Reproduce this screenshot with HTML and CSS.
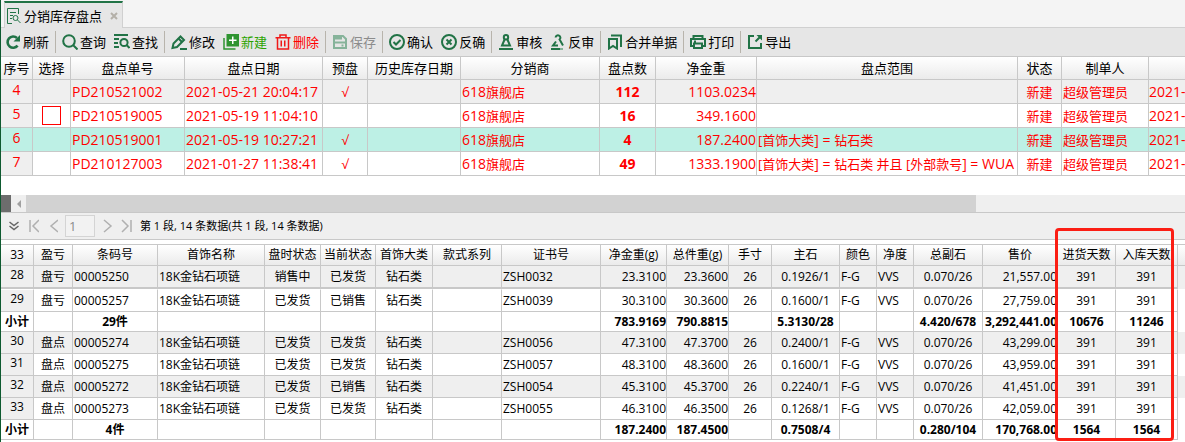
FILE: index.html
```html
<!DOCTYPE html>
<html lang="zh-CN">
<head>
    <meta charset="UTF-8">
    <title>分销库存盘点</title>
    <link rel="stylesheet" href="styles.css">
</head>
<body>
    <div class="tabs">
        <div class="tab">
            <svg class="tab-icon" width="16" height="18" viewBox="0 0 16 18" fill="none" stroke="#217346">
                <path d="M6 16.5H1.5V1.5H12.5V7M4 5.5h6M4 8.5h3M4 11.5h2"/>
                <circle cx="9.5" cy="11" r="2.5"/>
                <path d="M11.5 13l3 3"/>
            </svg>
            <span>分销库存盘点</span>
            <button class="tab-close" aria-label="关闭">
                <svg width="8" height="8" viewBox="0 0 8 8" stroke="#b4b0a8" stroke-width="2"><path d="M1 1l6 6M7 1L1 7"/></svg>
            </button>
        </div>
    </div>

    <div class="toolbar">
        <button class="tool">
            <svg width="16" height="16" viewBox="0 0 16 16" fill="none" stroke="#217346" stroke-width="2.6"><path d="M12.6 11.6A5.6 5.6 0 1 1 12 4"/><path d="M15 1v6.500H8.500z" fill="#217346" stroke="none"/></svg>
            刷新
        </button>
        <span class="sep"></span>
        <button class="tool">
            <svg width="16" height="16" viewBox="0 0 16 16" fill="none" stroke="#217346" stroke-width="2"><circle cx="7" cy="7" r="5.8"/><path d="M11 11l4.500 4.500"/></svg>
            查询
        </button>
        <button class="tool">
            <svg width="16" height="16" viewBox="0 0 16 16" fill="none" stroke="#217346" stroke-width="2"><path d="M0 1h14M0 5h5M0 9h4M0 13h5"/><circle cx="10" cy="8.500" r="3.6"/><path d="M12.500 11l3 3"/></svg>
            查找
        </button>
        <span class="sep"></span>
        <button class="tool">
            <svg width="16" height="16" viewBox="0 0 16 16" fill="none" stroke="#217346" stroke-width="2"><path d="M1.500 14l1-4.500L9.500 2.500l3.500 3.500L6 13z"/><path d="M7.500 4.500L11 8M9 15h7"/></svg>
            修改
        </button>
        <button class="tool tool-new">
            <svg width="16" height="16" viewBox="0 0 16 16"><path d="M1 4v11h11.500" fill="none" stroke="#2e9430" stroke-width="1.500"/><path d="M3.500 0H16v12.500H3.500z" fill="#2e9430"/><path d="M9.750 2.500v7.500M6 6.250h7.500" stroke="#fff" stroke-width="1.500"/></svg>
            新建
        </button>
        <button class="tool tool-delete">
            <svg width="16" height="16" viewBox="0 0 16 16" fill="none" stroke="#f01818" stroke-width="1.500"><path d="M0.500 3.750h15M5 3V1h6v2M2.500 4v11h11V4M6.250 6.500v6M9.750 6.500v6"/></svg>
            删除
        </button>
        <span class="sep"></span>
        <button class="tool" disabled>
            <svg width="16" height="16" viewBox="0 0 16 16" fill="none" stroke="#86b39a" stroke-width="2"><path d="M2 2h9l3 3v9H2z"/><path d="M3 4h7" stroke-width="3"/><path d="M2 8.500h12M9.500 11.500h2"/></svg>
            保存
        </button>
        <span class="sep"></span>
        <button class="tool">
            <svg width="16" height="16" viewBox="0 0 16 16" fill="none" stroke="#217346" stroke-width="2"><circle cx="8" cy="8" r="7"/><path d="M4.500 8l2.500 2.500 4.500-4.500"/></svg>
            确认
        </button>
        <button class="tool">
            <svg width="16" height="16" viewBox="0 0 16 16" fill="none" stroke="#217346" stroke-width="2"><circle cx="8" cy="8" r="7"/><path d="M5.500 5.500l5 5M10.500 5.500l-5 5"/></svg>
            反确
        </button>
        <span class="sep"></span>
        <button class="tool">
            <svg width="16" height="16" viewBox="0 0 16 16" fill="none" stroke="#217346" stroke-width="2"><circle cx="8" cy="3.200" r="2.200"/><path d="M6.800 5L4 11.500h8L9.200 5M1 15h14"/></svg>
            审核
        </button>
        <button class="tool">
            <svg width="16" height="16" viewBox="0 0 16 16" fill="none" stroke="#217346" stroke-width="2"><path d="M5.600 3.500a2.400 2.400 0 1 1 4 2L13 11.500M6 7.500L3 11.500h5M1 15h9"/><path d="M10 15h3" stroke="#86b39a"/></svg>
            反审
        </button>
        <span class="sep"></span>
        <button class="tool">
            <svg width="16" height="16" viewBox="0 0 16 16" fill="none" stroke="#217346" stroke-width="2"><path d="M2 5h8v9.500L6 12l-4 2.500z"/><path d="M4 1.500h10V13"/></svg>
            合并单据
        </button>
        <span class="sep"></span>
        <button class="tool">
            <svg width="16" height="16" viewBox="0 0 16 16" fill="none" stroke="#217346" stroke-width="2"><path d="M3.500 5V2h9v3M3 12H1V5h14v7h-2"/><path d="M4 9.500h8V14H4zM4 7.500h2"/></svg>
            打印
        </button>
        <span class="sep"></span>
        <button class="tool">
            <svg width="16" height="16" viewBox="0 0 16 16" fill="none" stroke="#217346" stroke-width="2"><path d="M7 2H2v12h12V9M8.500 7.500L13 3"/><path d="M9.500 1H15v5.500z" fill="#217346" stroke="none"/></svg>
            导出
        </button>
    </div>

    <table class="grid orders">
        <colgroup>
            <col class="w32"><col class="w38"><col class="w114"><col class="w138"><col class="w45"><col class="w93"><col class="w139"><col class="w56"><col class="w101"><col class="w261"><col class="w44"><col class="w87"><col>
        </colgroup>
        <thead>
            <tr><th>序号</th><th>选择</th><th>盘点单号</th><th>盘点日期</th><th>预盘</th><th>历史库存日期</th><th>分销商</th><th>盘点数</th><th>净金重</th><th>盘点范围</th><th>状态</th><th>制单人</th><th></th></tr>
        </thead>
        <tbody>
            <tr class="odd"><td class="idx">4</td><td></td><td class="code">PD210521002</td><td class="code">2021-05-21 20:04:17</td><td class="center">√</td><td></td><td><span class="code">618</span>旗舰店</td><td class="center code"><b>112</b></td><td class="num code">1103.0234</td><td></td><td class="center">新建</td><td>超级管理员</td><td class="code">2021-</td></tr>
            <tr><td class="idx">5</td><td class="center"><input type="checkbox" class="check" aria-label="选择 PD210519005"></td><td class="code">PD210519005</td><td class="code">2021-05-19 11:04:10</td><td></td><td></td><td><span class="code">618</span>旗舰店</td><td class="center code"><b>16</b></td><td class="num code">349.1600</td><td></td><td class="center">新建</td><td>超级管理员</td><td class="code">2021-</td></tr>
            <tr class="selected"><td class="idx">6</td><td></td><td class="code">PD210519001</td><td class="code">2021-05-19 10:27:21</td><td class="center">√</td><td></td><td><span class="code">618</span>旗舰店</td><td class="center code"><b>4</b></td><td class="num code">187.2400</td><td>[首饰大类<span class="code">] = </span>钻石类</td><td class="center">新建</td><td>超级管理员</td><td class="code">2021-</td></tr>
            <tr><td class="idx">7</td><td></td><td class="code">PD210127003</td><td class="code">2021-01-27 11:38:41</td><td class="center">√</td><td></td><td><span class="code">618</span>旗舰店</td><td class="center code"><b>49</b></td><td class="num code">1333.1900</td><td>[首饰大类<span class="code">] = </span>钻石类 并且 [外部款号<span class="code">] = WUA</span></td><td class="center">新建</td><td>超级管理员</td><td class="code">2021-</td></tr>
        </tbody>
    </table>

    <div class="scrollbar">
        <div class="splitter"></div>
        <button class="scroll-left" aria-label="向左滚动"><svg width="4" height="8" viewBox="0 0 4 8" fill="#a0a0a0"><path d="M4 0v8L0 4z"/></svg></button>
        <div class="track"><div class="thumb"></div></div>
    </div>

    <div class="pager">
        <button aria-label="展开"><svg width="12" height="10" viewBox="0 0 12 10" fill="none" stroke="#666" stroke-width="1.500"><path d="M1.500 1L6 4.500 10.500 1M1.500 5L6 8.500 10.500 5"/></svg></button>
        <button aria-label="首页"><svg width="12" height="14" viewBox="0 0 12 14" fill="none" stroke="#b0b0b0" stroke-width="1.500"><path d="M3 1v12M12 1L6 7l6 6"/></svg></button>
        <button aria-label="上一页"><svg width="12" height="14" viewBox="0 0 12 14" fill="none" stroke="#b0b0b0" stroke-width="1.500"><path d="M12 1L5 7l7 6"/></svg></button>
        <input type="text" class="page-no" value="1" aria-label="页码">
        <button aria-label="下一页"><svg width="12" height="14" viewBox="0 0 12 14" fill="none" stroke="#b0b0b0" stroke-width="1.500"><path d="M2 1l7 6-7 6"/></svg></button>
        <button aria-label="末页"><svg width="12" height="14" viewBox="0 0 12 14" fill="none" stroke="#b0b0b0" stroke-width="1.500"><path d="M10 1v12M1 1l6 6-6 6"/></svg></button>
        <span class="page-info">第 1 段, 14 条数据(共 1 段, 14 条数据)</span>
    </div>

    <div class="detail-box">
        <table class="grid detail">
            <colgroup>
                <col class="w33"><col class="w39"><col class="w85"><col class="w107"><col class="w56"><col class="w55"><col class="w57"><col class="w69"><col class="w99"><col class="w66"><col class="w62"><col class="w43"><col class="w68"><col class="w37"><col class="w37"><col class="w69"><col class="w75"><col class="w58"><col class="w62"><col>
            </colgroup>
            <thead>
                <tr><th>33</th><th>盈亏</th><th>条码号</th><th>首饰名称</th><th>盘时状态</th><th>当前状态</th><th>首饰大类</th><th>款式系列</th><th>证书号</th><th>净金重(g)</th><th>总件重(g)</th><th>手寸</th><th>主石</th><th>颜色</th><th>净度</th><th>总副石</th><th>售价</th><th>进货天数</th><th>入库天数</th><th></th></tr>
            </thead>
            <tbody>
                <tr class="odd frozen"><td class="idx">28</td><td class="center">盘亏</td><td>00005250</td><td>18K金钻石项链</td><td class="center">销售中</td><td class="center">已发货</td><td class="center">钻石类</td><td></td><td>ZSH0032</td><td class="num">23.3100</td><td class="num">23.3600</td><td class="center">26</td><td class="center">0.1926/1</td><td>F-G</td><td>VVS</td><td class="center">0.070/26</td><td class="num">21,557.00</td><td class="center">391</td><td class="center">391</td><td></td></tr>
                <tr class="after-frozen"><td class="idx">29</td><td class="center">盘亏</td><td>00005257</td><td>18K金钻石项链</td><td class="center">已发货</td><td class="center">已销售</td><td class="center">钻石类</td><td></td><td>ZSH0039</td><td class="num">30.3100</td><td class="num">30.3600</td><td class="center">26</td><td class="center">0.1600/1</td><td>F-G</td><td>VVS</td><td class="center">0.070/26</td><td class="num">27,759.00</td><td class="center">391</td><td class="center">391</td><td></td></tr>
                <tr class="subtotal"><td class="center">小计</td><td></td><td class="center">29件</td><td></td><td></td><td></td><td></td><td></td><td></td><td class="num">783.9169</td><td class="num">790.8815</td><td></td><td class="center">5.3130/28</td><td></td><td></td><td class="center">4.420/678</td><td class="num">3,292,441.00</td><td class="center">10676</td><td class="center">11246</td><td></td></tr>
                <tr class="odd"><td class="idx">30</td><td class="center">盘点</td><td>00005274</td><td>18K金钻石项链</td><td class="center">已发货</td><td class="center">已发货</td><td class="center">钻石类</td><td></td><td>ZSH0056</td><td class="num">47.3100</td><td class="num">47.3700</td><td class="center">26</td><td class="center">0.2400/1</td><td>F-G</td><td>VVS</td><td class="center">0.070/26</td><td class="num">43,299.00</td><td class="center">391</td><td class="center">391</td><td></td></tr>
                <tr><td class="idx">31</td><td class="center">盘点</td><td>00005275</td><td>18K金钻石项链</td><td class="center">已发货</td><td class="center">已发货</td><td class="center">钻石类</td><td></td><td>ZSH0057</td><td class="num">48.3100</td><td class="num">48.3600</td><td class="center">26</td><td class="center">0.1600/1</td><td>F-G</td><td>VVS</td><td class="center">0.070/26</td><td class="num">43,959.00</td><td class="center">391</td><td class="center">391</td><td></td></tr>
                <tr class="odd"><td class="idx">32</td><td class="center">盘点</td><td>00005272</td><td>18K金钻石项链</td><td class="center">已发货</td><td class="center">已销售</td><td class="center">钻石类</td><td></td><td>ZSH0054</td><td class="num">45.3100</td><td class="num">45.3700</td><td class="center">26</td><td class="center">0.2240/1</td><td>F-G</td><td>VVS</td><td class="center">0.070/26</td><td class="num">41,451.00</td><td class="center">391</td><td class="center">391</td><td></td></tr>
                <tr><td class="idx">33</td><td class="center">盘点</td><td>00005273</td><td>18K金钻石项链</td><td class="center">已发货</td><td class="center">已发货</td><td class="center">钻石类</td><td></td><td>ZSH0055</td><td class="num">46.3100</td><td class="num">46.3500</td><td class="center">26</td><td class="center">0.1268/1</td><td>F-G</td><td>VVS</td><td class="center">0.070/26</td><td class="num">42,059.00</td><td class="center">391</td><td class="center">391</td><td></td></tr>
                <tr class="subtotal"><td class="center">小计</td><td></td><td class="center">4件</td><td></td><td></td><td></td><td></td><td></td><td></td><td class="num">187.2400</td><td class="num">187.4500</td><td></td><td class="center">0.7508/4</td><td></td><td></td><td class="center">0.280/104</td><td class="num">170,768.00</td><td class="center">1564</td><td class="center">1564</td><td></td></tr>
            </tbody>
        </table>
        <div class="highlight"></div>
    </div>
</body>
</html>
```
FILE: styles.css
```css
* {
    box-sizing: border-box;
}
body {
    margin: 0;
    min-height: 100vh;
    border-left: 1px solid #0e5a30;
    background-color: #fff;
    color: #000;
    font-family: "Open Sans", "Noto Sans CJK SC", sans-serif;
    font-size: 13px;
    line-height: 18px;
    overflow: hidden;
}
button {
    font: inherit;
    color: inherit;
    background: none;
    border: none;
    padding: 0;
    cursor: pointer;
}
svg {
    display: block;
    flex-shrink: 0;
}

/* tabs */
.tabs {
    display: flex;
    align-items: flex-end;
    height: 28px;
    padding-left: 3px;
    background-color: #f4f4f4;
    border-bottom: 1px solid #d0d0d0;
}
.tab {
    display: flex;
    align-items: center;
    height: 27px;
    padding: 0 4px 0 1px;
    gap: 2px;
    background-color: #e6e6e6;
    border-top: 2px solid #217346;
    border-right: 1px solid #d0d0d0;
    border-left: 1px solid #d0d0d0;
    margin-bottom: -1px;
}
.tab-close {
    margin-left: 6px;
}

/* toolbar */
.toolbar {
    display: flex;
    align-items: center;
    height: 29px;
    background-color: #e6e6e6;
    border-bottom: 1px solid #c8c8c8;
}
.tool {
    display: flex;
    align-items: center;
    gap: 2px;
    padding: 0 4px;
    white-space: nowrap;
}
.tool-new {
    color: #2ca300;
}
.tool-delete {
    color: #f00;
}
.tool:disabled {
    color: #8c8c8c;
}
.sep {
    width: 1px;
    height: 22px;
    margin: 0 2px;
    background-color: #b8b4ac;
}

/* tables */
.grid {
    width: 100%;
    table-layout: fixed;
    border-collapse: separate;
    border-spacing: 0;
}
.grid th,
.grid td {
    padding: 0 0 0 1px;
    border-right: 1px solid #c8c8c8;
    border-bottom: 1px solid #c8c8c8;
    white-space: nowrap;
    overflow: hidden;
}
.grid th {
    padding: 0;
    font-weight: normal;
    background: linear-gradient(#fff, #ebebeb);
}
.grid th:last-child,
.grid td:last-child {
    border-right: none;
}
.grid .odd td,
.grid .idx {
    background-color: #efefef;
}
.grid .idx {
    padding: 0 0 3px;
    text-align: center;
}
.grid .center {
    padding: 0;
    text-align: center;
}
.grid .num {
    padding: 0;
    text-align: right;
}
.orders th {
    height: 23px;
}
.orders td {
    height: 24px;
    color: #f00;
}
.orders td:last-child {
    padding: 0;
}
.orders .code,
.orders .idx {
    font-size: 14px;
}
.orders .selected td {
    background-color: #bdf0e5;
}
.check {
    appearance: none;
    display: block;
    width: 19px;
    height: 19px;
    margin: 0 auto;
    border: 1px solid #f00;
    background-color: #fff;
}

/* scrollbar and pager */
.scrollbar {
    display: flex;
    height: 17px;
    margin-top: 19px;
    background-color: #efefef;
}
.splitter {
    width: 10px;
    background-color: #6d6d6d;
}
.scroll-left {
    display: flex;
    align-items: center;
    justify-content: center;
    width: 15px;
}
.track {
    flex: 1;
}
.thumb {
    width: 82%;
    height: 100%;
    background-color: #d2d2d2;
}
.pager {
    display: flex;
    align-items: center;
    gap: 7px;
    height: 28px;
    padding-left: 7px;
    background-color: #efefef;
    border-top: 1px solid #c8c8c8;
    border-bottom: 1px solid #c8c8c8;
}
.page-no {
    width: 30px;
    height: 22px;
    padding: 0 3px;
    border: 1px solid #d4d4d4;
    background-color: #f2f2f2;
    color: #8c8c8c;
    font: inherit;
}
.page-info {
    font-size: 11px;
}

/* detail */
.detail-box {
    position: relative;
    margin-top: 4px;
}
.detail {
    border-top: 1px solid #c8c8c8;
    font-size: 12px;
    line-height: 16px;
}
.detail th {
    height: 21px;
}
.detail td {
    height: 22px;
}
.detail .frozen td {
    height: 23px;
    border-bottom-width: 2px;
}
.detail .after-frozen td {
    height: 23px;
    border-top: 1px solid #fff;
}
.detail .subtotal td {
    height: 20px;
    font-weight: bold;
}
.detail td:last-child {
    border-bottom: none;
}
.highlight {
    position: absolute;
    top: -16px;
    left: 1054px;
    width: 119px;
    bottom: -1px;
    border: 3px solid #fb1e14;
    border-radius: 4px;
}

/* column widths */
.w32 { width: 32px; }
.w33 { width: 33px; }
.w37 { width: 37px; }
.w38 { width: 38px; }
.w39 { width: 39px; }
.w43 { width: 43px; }
.w44 { width: 44px; }
.w45 { width: 45px; }
.w55 { width: 55px; }
.w56 { width: 56px; }
.w57 { width: 57px; }
.w58 { width: 58px; }
.w62 { width: 62px; }
.w66 { width: 66px; }
.w68 { width: 68px; }
.w69 { width: 69px; }
.w75 { width: 75px; }
.w85 { width: 85px; }
.w87 { width: 87px; }
.w93 { width: 93px; }
.w99 { width: 99px; }
.w101 { width: 101px; }
.w107 { width: 107px; }
.w114 { width: 114px; }
.w138 { width: 138px; }
.w139 { width: 139px; }
.w261 { width: 261px; }
```
